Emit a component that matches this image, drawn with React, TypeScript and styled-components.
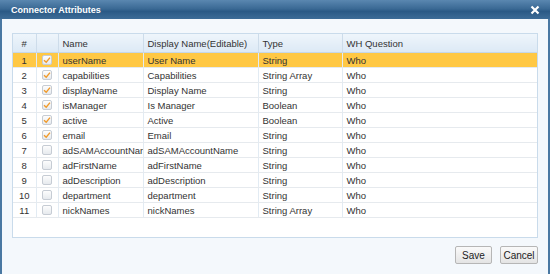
import React from "react";
import styled, { createGlobalStyle } from "styled-components";

const GlobalStyle = createGlobalStyle`
  html, body {
    margin: 0;
    padding: 0;
    background: #ffffff;
  }
  body {
    font-family: "Liberation Sans", Arial, sans-serif;
    font-size: 9.5px;
    color: #333;
  }
`;

const Dialog = styled.div`
  width: 550px;
  height: 274px;
  box-sizing: border-box;
  display: flex;
  flex-direction: column;
  background: #f4f8fc;
  border-left: 2px solid #4a78a2;
  border-right: 2px solid #4a78a2;
`;

const TitleBar = styled.div`
  height: 19px;
  margin: 0 -2px;
  display: flex;
  align-items: center;
  justify-content: space-between;
  padding: 0 10px 0 11px;
  background: linear-gradient(#5a87b0 0%, #3b6a95 45%, #2b5a86 60%, #3d6c97 100%);
  color: #fff;
  font-weight: bold;
  font-size: 9px;
`;

const CloseButton = styled.span`
  display: flex;
  align-items: center;
  justify-content: center;
  width: 10px;
  height: 10px;
  margin-top: 1px;
`;

const Body = styled.div`
  flex: 1;
  display: flex;
  flex-direction: column;
  padding: 14px 10px 9px 10px;
`;

const GridBox = styled.div`
  height: 205px;
  box-sizing: border-box;
  border: 1px solid #c9dbeb;
  background: #fff;
`;

const Table = styled.table`
  width: 100%;
  border-collapse: collapse;
  table-layout: fixed;
`;

const HeadCell = styled.th<{ $center?: boolean }>`
  height: 18px;
  padding: 0 0 0 4px;
  text-align: ${(p) => (p.$center ? "center" : "left")};
  font-weight: normal;
  white-space: nowrap;
  overflow: hidden;
  color: #333;
  background: linear-gradient(#eef5fb, #dce9f5);
  border-right: 1px solid #cddcea;
  border-bottom: 1px solid #c5d7e8;
  &:last-child {
    border-right: none;
  }
`;

const Row = styled.tr<{ $selected?: boolean }>`
  background: ${(p) => (p.$selected ? "#ffc844" : "#fff")};
`;

const Cell = styled.td`
  height: 14px;
  padding: 0 0 0 4px;
  text-align: left;
  white-space: nowrap;
  overflow: hidden;
  color: #333;
  border-right: 1px solid #e2ebf3;
  border-bottom: 1px solid #e6eaee;
  &:last-child {
    border-right: none;
  }
`;

const NumCell = styled(Cell)`
  padding: 0;
  text-align: center;
`;

const CheckCell = styled(Cell)`
  padding: 0;
`;

const Check = styled.span`
  display: flex;
  align-items: center;
  justify-content: center;
  width: 10px;
  height: 10px;
  margin: 0 auto;
  border: 1px solid #c6ccd4;
  border-radius: 2px;
  background: linear-gradient(#fdfdfd, #e6eaee);
  box-sizing: border-box;
`;

const Footer = styled.div`
  display: flex;
  justify-content: flex-end;
  gap: 8px;
  margin-top: 8px;
`;

const Button = styled.button<{ $w: number }>`
  width: ${(p) => p.$w}px;
  height: 18px;
  padding: 0;
  font-family: "Liberation Sans", Arial, sans-serif;
  font-size: 10px;
  color: #222;
  border: 1px solid #b6b6b6;
  border-radius: 2px;
  background: linear-gradient(#fafafa, #e4e4e4);
`;

const CheckMark = () => (
  <svg width="8" height="8" viewBox="0 0 8 8">
    <path d="M1 4.2 L3.2 6.2 L7 1.6" fill="none" stroke="#f09a2a" strokeWidth="1.4" />
  </svg>
);

const CloseIcon = () => (
  <svg width="10" height="10" viewBox="0 0 10 10">
    <path d="M1.5 1.5 L8.5 8.5 M8.5 1.5 L1.5 8.5" stroke="#fff" strokeWidth="2.2" />
  </svg>
);

interface IAttr {
  name: string;
  display: string;
  type: string;
  checked: boolean;
}

const rows: IAttr[] = [
  { name: "userName", display: "User Name", type: "String", checked: true },
  { name: "capabilities", display: "Capabilities", type: "String Array", checked: true },
  { name: "displayName", display: "Display Name", type: "String", checked: true },
  { name: "isManager", display: "Is Manager", type: "Boolean", checked: true },
  { name: "active", display: "Active", type: "Boolean", checked: true },
  { name: "email", display: "Email", type: "String", checked: true },
  { name: "adSAMAccountName", display: "adSAMAccountName", type: "String", checked: false },
  { name: "adFirstName", display: "adFirstName", type: "String", checked: false },
  { name: "adDescription", display: "adDescription", type: "String", checked: false },
  { name: "department", display: "department", type: "String", checked: false },
  { name: "nickNames", display: "nickNames", type: "String Array", checked: false },
];

const colWidths = [23, 22, 85, 115, 84];

export default function App() {
  return (
    <>
      <GlobalStyle />
      <Dialog>
        <TitleBar>
          <span>Connector Attributes</span>
          <CloseButton>
            <CloseIcon />
          </CloseButton>
        </TitleBar>
        <Body>
          <GridBox>
            <Table>
              <colgroup>
                {colWidths.map((w, i) => (
                  <col key={i} style={{ width: w }} />
                ))}
                <col />
              </colgroup>
              <thead>
                <tr>
                  <HeadCell $center style={{ padding: 0 }}>#</HeadCell>
                  <HeadCell />
                  <HeadCell>Name</HeadCell>
                  <HeadCell>Display Name(Editable)</HeadCell>
                  <HeadCell>Type</HeadCell>
                  <HeadCell>WH Question</HeadCell>
                </tr>
              </thead>
              <tbody>
                {rows.map((r, i) => (
                  <Row key={r.name} $selected={i === 0}>
                    <NumCell>{i + 1}</NumCell>
                    <CheckCell>
                      <Check>{r.checked && <CheckMark />}</Check>
                    </CheckCell>
                    <Cell>{r.name}</Cell>
                    <Cell>{r.display}</Cell>
                    <Cell>{r.type}</Cell>
                    <Cell>Who</Cell>
                  </Row>
                ))}
              </tbody>
            </Table>
          </GridBox>
          <Footer>
            <Button $w={37}>Save</Button>
            <Button $w={38}>Cancel</Button>
          </Footer>
        </Body>
      </Dialog>
    </>
  );
}
